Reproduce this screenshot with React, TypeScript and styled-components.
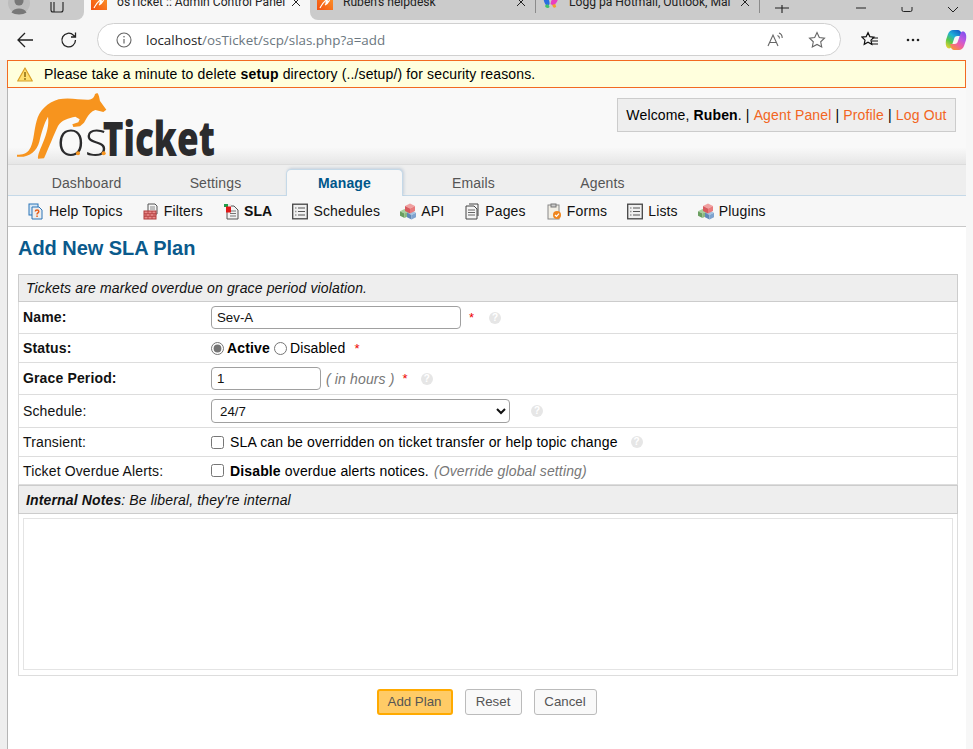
import React from 'react';
import styled, { createGlobalStyle } from 'styled-components';

const Global = createGlobalStyle`
  html, body { margin: 0; padding: 0; background: #fff; }
  body { font-family: "Liberation Sans", Arial, sans-serif; font-size: 14px; color: #000; }
  * { box-sizing: border-box; }
`;

const Screen = styled.div`width: 973px; height: 749px; overflow: hidden; display: flex; flex-direction: column; background: #f7f7f7;`;

const TabStrip = styled.div`height: 20px; flex: none; background: #f7f7f7; display: flex; overflow: hidden; font-family: Roboto, "Open Sans", sans-serif; color: #222;`;
const StripLeft = styled.div`width: 84px; height: 20px; flex: none; background: #cbcbcb; border-radius: 0 0 8px 0; display: flex;`;
const StripRight = styled.div`flex: 1; height: 20px; background: #cbcbcb; border-radius: 0 0 0 8px; display: flex;`;
const ProfileSlot = styled.div`width: 38px; height: 20px; display: flex; justify-content: center; align-items: flex-start;`;
const SideSlot = styled.div`width: 46px; height: 20px; padding-left: 12px;`;
const BrowserTab = styled.div<{ $w: number }>`
  width: ${p => p.$w}px; height: 20px; flex: none; display: flex; align-items: center; padding: 0 9px 16px 7px; gap: 10px;
`;
const TabLabel = styled.span`flex: 1; white-space: nowrap; overflow: hidden; line-height: 20px; height: 20px; font-size: 12.1px; margin-right: -6px;`;
const TabSep = styled.div`width: 1px; height: 13px; background: #8b8b8b; flex: none;`;
const WindowControls = styled.div`flex: 1; display: flex; align-items: flex-start; padding-left: 15px;`;
const WinBtn = styled.div<{ $ml: number }>`margin-left: ${p => p.$ml}px; height: 20px;`;

const Toolbar = styled.div`height: 40px; flex: none; display: flex; align-items: center; background: #f7f7f7; padding-left: 15px;`;
const ToolBtn = styled.div<{ $w: number }>`width: ${p => p.$w}px; display: flex; align-items: center;`;
const AddressBar = styled.div`width: 744px; height: 33px; margin-top: -1px; border: 1px solid #d0d0d0; border-radius: 17px; background: #fff; display: flex; align-items: center; padding: 0 14px 0 18px;`;
const Url = styled.div`flex: 1; margin-left: 14px; font-family: "Open Sans", "Noto Sans", sans-serif; font-size: 13.4px; color: #6b7780;`;
const UrlHost = styled.span`color: #1f1f1f;`;
const AddressIcons = styled.div`display: flex; align-items: center; gap: 24px;`;
const RightTools = styled.div`display: flex; align-items: center; margin-left: 20px; gap: 27px;`;

const Body = styled.div`flex: 1; display: flex; min-height: 0; letter-spacing: .14px;`;
const LeftGutter = styled.div`width: 8px; flex: none; background: #eee; border-right: 1px solid #b5b5b5;`;
const RightGutter = styled.div`width: 7px; flex: none; background: #f7f7f7;`;
const Main = styled.div`width: 958px; flex: none; background: #fff; display: flex; flex-direction: column;`;

const Notice = styled.div`
  height: 28px; margin-left: -1px; border: 1px solid #f26a22; background: #ffffdd; display: flex; align-items: center; padding-left: 9px; gap: 11px; font-size: 14px;
`;

const Header = styled.div`
  height: 77px; flex: none; background: linear-gradient(#f9f9f9 0, #f9f9f9 78%, #e6e6e6 100%); display: flex; justify-content: space-between; padding: 2px 10px 0 4px; border-bottom: 1px solid #dcdcdc;
`;
const LogoSvg = styled.svg`display: block; flex: none;`;
const Welcome = styled.div`
  margin-top: 8px; width: 339px; height: 34px; background: #eee; border: 1px solid #ccc; display: flex; align-items: center; justify-content: center; white-space: pre; font-size: 14px;
`;
const HeadLink = styled.a`color: #f26522; text-decoration: none;`;

const NavBar = styled.div`height: 31px; flex: none; background: #eee; border-bottom: 1px solid #c5d9e8; display: flex; padding: 4px 0 0 14px;`;
const NavTab = styled.div<{ $active?: boolean }>`
  width: ${p => (p.$active ? 117 : 129)}px; height: ${p => (p.$active ? 27 : 26)}px;
  margin: ${p => (p.$active ? '0 6px' : '0')};
  display: flex; align-items: center; justify-content: center; font-size: 14px;
  color: ${p => (p.$active ? '#00568a' : '#555')};
  font-weight: ${p => (p.$active ? 700 : 400)};
  background: ${p => (p.$active ? '#f7f7f7' : 'transparent')};
  border: ${p => (p.$active ? '1px solid #c5d9e8' : '0')};
  border-bottom: 0;
  border-radius: 5px 5px 0 0;
  box-shadow: ${p => (p.$active ? '1px -1px 3px rgba(120,150,180,.35)' : 'none')};
  padding-top: ${p => (p.$active ? 0 : 1)}px;
`;

const SubNav = styled.div`height: 31px; flex: none; background: #f7f7f7; border-bottom: 1px solid #c8c8c8; display: flex; align-items: center; padding-left: 20px; gap: 20.1px;`;
const SubItem = styled.div<{ $active?: boolean }>`display: flex; align-items: center; gap: 5px; font-size: 14px; font-weight: ${p => (p.$active ? 700 : 400)}; color: #111;`;

const Content = styled.div`flex: 1; padding: 0 8px 0 10px;`;
const Title = styled.h2`margin: 0; padding: 9px 0 0 0; height: 47px; font-size: 20px; line-height: 24px; font-weight: 700; letter-spacing: -.05px; color: #0a5a8c;`;

const FormTable = styled.div`border-left: 1px solid #ddd; border-right: 1px solid #ddd; border-bottom: 1px solid #ddd; width: 940px;`;
const Section = styled.div<{ $h: number }>`height: ${p => p.$h}px; margin: 0 -1px; background: #eee; border: 1px solid #ccc; display: flex; align-items: center; padding-left: 7px; font-style: italic; font-size: 14px; color: #111;`;
const Row = styled.div<{ $h: number }>`height: ${p => p.$h}px; display: grid; grid-template-columns: 192px 1fr; align-items: center; border-bottom: 1px solid #ddd;`;
const Label = styled.div<{ $req?: boolean; $up?: boolean }>`padding-left: 4px; margin-bottom: ${p => (p.$up ? 2 : 0)}px; font-size: 14px; font-weight: ${p => (p.$req ? 700 : 400)}; color: #111;`;
const Field = styled.div`display: flex; align-items: center; font-size: 14px; white-space: pre;`;
const TextInput = styled.input<{ $w: number }>`
  width: ${p => p.$w}px; height: 23px; border: 1px solid #a0a0a0; border-radius: 4px; padding: 0 5px; font: 13.3px "Liberation Sans", Arial, sans-serif; color: #111; background: #fff;
`;
const Select = styled.select`width: 299px; height: 24px; border: 1px solid #a0a0a0; border-radius: 4px; background: #fff; font: 13.3px "Liberation Sans", Arial, sans-serif; color: #111; padding: 0 4px;`;
const Radio = styled.input<{ $ml?: number }>`margin: 0 3px 0 ${p => p.$ml ?? 0}px; width: 13px; height: 13px; accent-color: #757575;`;
const Check = styled.input`margin: 0 6px 0 0; width: 13px; height: 13px; flex: none;`;
const Req = styled.span<{ $ml: number }>`margin-left: ${p => p.$ml}px; color: #e00; font-size: 13px;`;
const Hint = styled.span`margin-left: 5px; color: #777; font-style: italic;`;
const HelpDot = styled.span<{ $ml: number }>`
  margin-left: ${p => p.$ml}px; width: 12px; height: 12px; border-radius: 50%; background: #e6e6e6; color: #fff; font-weight: 700; font-size: 10px; line-height: 12px; text-align: center; flex: none;
`;
const NotesWrap = styled.div`height: 161px; padding: 4px 4px 5px 4px;`;
const Notes = styled.textarea`display: block; width: 100%; height: 152px; border: 1px solid #e4e4e4; resize: none; outline: none; background: #fff;`;

const Actions = styled.div`display: flex; justify-content: center; gap: 12px; padding: 13px 0 0 0; margin-left: -3px;`;
const Btn = styled.button<{ $primary?: boolean; $w: number }>`
  width: ${p => p.$w}px; height: 26px; padding: 0 0 2px; border-radius: 3px; font: 13.3px "Liberation Sans", Arial, sans-serif; color: #555;
  background: ${p => (p.$primary ? '#ffcb66' : '#f9f9f9')};
  border: ${p => (p.$primary ? '2px solid #ffaa00' : '1px solid #bbb')};
`;

const IconSvg = styled.svg`flex: none; display: block;`;
const CopilotSvg = styled.svg`flex: none; display: block; margin-left: -2px;`;

const Favicon = () => (
  <IconSvg width="16" height="16" viewBox="0 0 16 16">
    <defs><linearGradient id="fav" x1="0" y1="1" x2="1" y2="0"><stop offset="0" stopColor="#f4500f" /><stop offset="1" stopColor="#fb9a2c" /></linearGradient></defs>
    <rect width="16" height="16" fill="url(#fav)" />
    <path d="M3 14C5 10 7 7 11 5c-1 2-2 3-2 4l3-2c-1 2-2 3-4 4" fill="none" stroke="#fff" strokeWidth="1.200" />
  </IconSvg>
);
const Butterfly = () => (
  <IconSvg width="16" height="16" viewBox="0 0 17 16">
    <path d="M1 3c3-3 6 2 6 7L5 13C2 11 0 6 1 3z" fill="#2b6fe0" />
    <path d="M16 2c-3-3-7 2-8 8l3 2c3-2 6-7 5-10z" fill="#e83fc0" />
    <path d="M2 12c1 3 4 3 5 1l-2-3z" fill="#3fc46a" />
    <path d="M10 11c0 3 2 4 4 2l-1-3z" fill="#f59e2c" />
  </IconSvg>
);
const CloseX = () => (
  <IconSvg width="10" height="10" viewBox="0 0 10 10"><path d="M1 1l8 8M9 1L1 9" stroke="#222" strokeWidth="1" /></IconSvg>
);
const Avatar = () => (
  <svg width="22" height="15" viewBox="0 0 22 15"><circle cx="11" cy="3" r="11" fill="#bcbcbc" /><circle cx="11" cy="1" r="4.500" fill="#777" /><path d="M3.500 12.500c2-5.500 13-5.500 15 0C15 15 7 15 3.500 12.500z" fill="#777" /></svg>
);
const Sidebar = () => (
  <svg width="14" height="11" viewBox="0 0 14 11"><path d="M1 -3v11a2 2 0 0 0 2 2h8a2 2 0 0 0 2-2V-3M4 -3v13" fill="none" stroke="#222" strokeWidth="1.100" /></svg>
);
const Back = () => (
  <svg width="20" height="20" viewBox="0 0 20 20"><path d="M18 10H3M10 3l-7 7 7 7" fill="none" stroke="#222" strokeWidth="1.300" /></svg>
);
const Reload = () => (
  <svg width="18" height="18" viewBox="0 0 18 18"><path d="M15.500 9a6.800 6.800 0 1 1-2-4.800L15.500 6M15.500 1.500V6H11" fill="none" stroke="#222" strokeWidth="1.300" /></svg>
);
const Info = () => (
  <IconSvg width="16" height="16" viewBox="0 0 16 16"><circle cx="8" cy="8" r="7" fill="none" stroke="#666" strokeWidth="1.100" /><path d="M8 7v4.500" stroke="#666" strokeWidth="1.200" /><circle cx="8" cy="4.800" r=".8" fill="#666" /></IconSvg>
);
const ReadAloud = () => (
  <svg width="17" height="16" viewBox="0 0 17 16"><path d="M1 14L6 3l5 11M3 10.500h6" fill="none" stroke="#666" strokeWidth="1.100" /><path d="M10.500 3.500c1.500.5 2 1.500 2 3M12 1c2 .7 3.200 2.400 3.200 5" fill="none" stroke="#666" strokeWidth="1.100" /></svg>
);
const Star = () => (
  <svg width="18" height="18" viewBox="0 0 18 18"><path d="M9 1.600l2.300 4.900 5.200.7-3.800 3.600 1 5.200L9 13.400 4.300 16l1-5.200L1.500 7.200l5.200-.7z" fill="none" stroke="#666" strokeWidth="1.100" /></svg>
);
const Favorites = () => (
  <svg width="18" height="18" viewBox="0 0 18 18"><path d="M7 1.600l1.800 4 4.200.5-3 3 .8 4.300L7 11.300 3.200 13.400l.8-4.300-3-3 4.200-.5z" fill="none" stroke="#111" strokeWidth="1.200" /><path d="M11 7h6M11 10h6M10 13h7" stroke="#111" strokeWidth="1.100" /></svg>
);
const Dots = () => (
  <svg width="14" height="4" viewBox="0 0 14 4"><circle cx="2" cy="2" r="1.300" fill="#222" /><circle cx="7" cy="2" r="1.300" fill="#222" /><circle cx="12" cy="2" r="1.300" fill="#222" /></svg>
);
const Copilot = () => (
  <CopilotSvg width="22" height="22" viewBox="0 0 22 22">
    <defs>
      <linearGradient id="cpa" x1=".75" y1="0" x2=".1" y2="1"><stop offset="0" stopColor="#1560c8" /><stop offset=".35" stopColor="#1fb0d8" /><stop offset=".65" stopColor="#58c848" /><stop offset="1" stopColor="#f5d030" /></linearGradient>
      <linearGradient id="cpb" x1=".9" y1="0" x2=".3" y2="1"><stop offset="0" stopColor="#7a4ff0" /><stop offset=".4" stopColor="#c05ae0" /><stop offset=".7" stopColor="#f060a0" /><stop offset="1" stopColor="#f59040" /></linearGradient>
    </defs>
    <path d="M8 1H13C14.500 1 15.500 2 16 3.500L17 7H12.500C10.500 7 9.500 8 9 10L6.500 17.500C6 19.500 4 20 2.500 19C.5 17.500 .5 14 1 11L3 5C4 2.500 6 1 8 1Z" fill="url(#cpa)" />
    <path d="M14 21H9C7.500 21 6.500 20 6 18.500L5 15H9.500C11.500 15 12.500 14 13 12L15.500 4.500C16 2.500 18 2 19.500 3C21.500 4.500 21.500 8 21 11L19 17C18 19.500 16 21 14 21Z" fill="url(#cpb)" />
  </CopilotSvg>
);
const Warn = () => (
  <IconSvg width="16" height="15" viewBox="0 0 16 15"><path d="M8 1L15.300 14H.7z" fill="#ffdf70" stroke="#d8a028" strokeWidth="1.200" strokeLinejoin="round" /><path d="M8 5v5" stroke="#8a6a10" strokeWidth="1.500" /><circle cx="8" cy="12" r=".9" fill="#8a6a10" /></IconSvg>
);

const Sheet = ({ children }: { children?: React.ReactNode }) => (
  <IconSvg width="16" height="17" viewBox="0 0 16 17">{children}</IconSvg>
);
const IconHelp = () => (
  <Sheet>
    <rect x="1" y="1" width="9" height="11" fill="#d8e8f5" stroke="#2a74b8" />
    <path d="M4 4h7l3 3v9H4z" fill="#eee" stroke="#2a74b8" />
    <path d="M7.300 8.500c0-2 3.500-2 3.500 0 0 1.400-1.800 1.400-1.800 3" fill="none" stroke="#e8601c" strokeWidth="1.500" />
    <rect x="8.300" y="12.500" width="1.500" height="1.500" fill="#e8601c" />
  </Sheet>
);
const IconFilter = () => (
  <Sheet>
    <path d="M5 1h7l2 2v8H5z" fill="#f5f5f5" stroke="#555" />
    <path d="M7 4h5M7 6h5" stroke="#888" />
    <rect x="1" y="8" width="12" height="8" fill="#e88a8a" stroke="#b03a3a" />
    <path d="M1 10.700h12M1 13.300h12M5 8v2.700M9 8v2.700M3 10.700v2.600M7 10.700v2.600M11 10.700v2.600M5 13.300V16M9 13.300V16" stroke="#b03a3a" strokeWidth=".8" />
  </Sheet>
);
const IconSla = () => (
  <Sheet>
    <path d="M4 3h7l4 4v9H4z" fill="#f2f2f2" stroke="#555" />
    <path d="M7 8h6M7 10.500h6M7 13h6" stroke="#777" />
    <rect x="1" y="1" width="4" height="3" fill="#1e9e4a" />
    <rect x="5" y="1" width="3" height="3" fill="#e8e8e8" />
    <rect x="3" y="3.500" width="5" height="6" fill="#e01818" />
  </Sheet>
);
const IconList = () => (
  <Sheet>
    <rect x=".7" y="1.200" width="14.600" height="14.600" fill="#f0f0f0" stroke="#444" strokeWidth="1.300" />
    <path d="M6 5h7M6 8.500h7M6 12h7" stroke="#555" />
    <path d="M3 5h1.500M3 8.500h1.500M3 12h1.500" stroke="#999" strokeWidth="1.500" />
  </Sheet>
);
const Cube = ({ x, y, s, top, left, right }: { x: number; y: number; s: number; top: string; left: string; right: string }) => (
  <g>
    <path d={`M${x} ${y}l${s} ${s / 2}l${-s} ${s / 2}l${-s} ${-s / 2}z`} fill={top} />
    <path d={`M${x - s} ${y + s / 2}l${s} ${s / 2}v${s}l${-s} ${-s / 2}z`} fill={left} />
    <path d={`M${x + s} ${y + s / 2}l${-s} ${s / 2}v${s}l${s} ${-s / 2}z`} fill={right} />
  </g>
);
const IconCubes = () => (
  <Sheet>
    <Cube x={4.500} y={6} s={4.500} top="#a8cf9c" left="#6a9e60" right="#88b87e" />
    <Cube x={11.500} y={7.500} s={4.500} top="#a6c4e2" left="#5f88b8" right="#7ea3cf" />
    <Cube x={10} y={.5} s={5} top="#f0a0a0" left="#d85a5e" right="#e87a7c" />
  </Sheet>
);
const IconPages = () => (
  <Sheet>
    <path d="M5 1h9v12" fill="none" stroke="#444" />
    <path d="M2 3h8l3 3v10H2z" fill="#f5f5f5" stroke="#444" />
    <path d="M4 7h7M4 9.500h7M4 12h7" stroke="#666" />
  </Sheet>
);
const IconForms = () => (
  <Sheet>
    <rect x="2" y="2" width="11" height="14" fill="#f2efe6" stroke="#888" />
    <rect x="5" y="1" width="5" height="3" fill="#ccc" stroke="#777" />
    <circle cx="11" cy="12" r="4" fill="#f0861e" />
    <path d="M9 12l1.500 1.500L13 10.700" fill="none" stroke="#fff" strokeWidth="1.200" />
  </Sheet>
);

const subItems: [string, React.FC, boolean?][] = [
  ['Help Topics', IconHelp], ['Filters', IconFilter], ['SLA', IconSla, true], ['Schedules', IconList],
  ['API', IconCubes], ['Pages', IconPages], ['Forms', IconForms], ['Lists', IconList], ['Plugins', IconCubes],
];

export default function App() {
  return (
    <Screen>
      <Global />
      <TabStrip>
        <StripLeft>
          <ProfileSlot><Avatar /></ProfileSlot>
          <SideSlot><Sidebar /></SideSlot>
        </StripLeft>
        <BrowserTab $w={226}>
          <Favicon /><TabLabel>osTicket :: Admin Control Panel</TabLabel><CloseX />
        </BrowserTab>
        <StripRight>
          <BrowserTab $w={225}>
            <Favicon /><TabLabel>Ruben's helpdesk</TabLabel><CloseX />
          </BrowserTab>
          <TabSep />
          <BrowserTab $w={223}>
            <Butterfly /><TabLabel>Logg på Hotmail, Outlook, Mai</TabLabel><CloseX />
          </BrowserTab>
          <TabSep />
          <WindowControls>
            <WinBtn $ml={0}><svg width="14" height="8" viewBox="0 0 14 8"><path d="M7 -6V8M0 3h14" stroke="#222" strokeWidth="1.100" /></svg></WinBtn>
            <WinBtn $ml={66}><svg width="12" height="6" viewBox="0 0 12 6"><path d="M1 1h10" stroke="#222" /></svg></WinBtn>
            <WinBtn $ml={34}><svg width="12" height="6" viewBox="0 0 12 6"><path d="M1 -6v9a1.500 1.500 0 0 0 1.500 1.500h7A1.500 1.500 0 0 0 11 3v-9" fill="none" stroke="#222" /></svg></WinBtn>
            <WinBtn $ml={34}><svg width="12" height="6" viewBox="0 0 12 6"><path d="M1 0l5 5 5-5" fill="none" stroke="#222" /></svg></WinBtn>
          </WindowControls>
        </StripRight>
      </TabStrip>
      <Toolbar>
        <ToolBtn $w={45}><Back /></ToolBtn>
        <ToolBtn $w={37}><Reload /></ToolBtn>
        <AddressBar>
          <Info />
          <Url><UrlHost>localhost</UrlHost>/osTicket/scp/slas.php?a=add</Url>
          <AddressIcons><ReadAloud /><Star /></AddressIcons>
        </AddressBar>
        <RightTools>
          <Favorites /><Dots /><Copilot />
        </RightTools>
      </Toolbar>
      <Body>
        <LeftGutter />
        <Main>
          <Notice><Warn /><span>Please take a minute to delete <b>setup</b> directory (../setup/) for security reasons.</span></Notice>
          <Header>
            <LogoSvg width="204" height="72" viewBox="0 0 612 216">
              <path fill="#f7941e" d="M15 194C32 196 48 190 56 172C66 150 66 120 74 92C82 62 106 38 140 28C170 21 205 30 230 29C240 28 246 24 249 12L256 9C261 14 262 25 264 33L283 59L274 66L250 60C238 64 230 74 224 84L216 98L204 109L184 111L181 103L199 97L203 88L190 80C170 84 148 90 138 108C125 135 112 170 96 205L78 206C76 195 86 175 94 155C103 133 112 105 108 80C96 100 88 130 82 155C74 185 50 204 15 200Z" />
              <text x="134" y="197" fontFamily="'Open Sans', sans-serif" fontWeight="300" fontSize="145" fill="#2b2b2d" textLength="152" lengthAdjust="spacingAndGlyphs">os</text>
              <text x="272" y="199" fontFamily="'Open Sans', sans-serif" fontWeight="800" fontSize="143" fill="#2b2b2d" textLength="337" lengthAdjust="spacingAndGlyphs">Ticket</text>
              <circle cx="198" cy="190" r="6" fill="#f7941e" />
              <circle cx="275" cy="190" r="6" fill="#f7941e" />
            </LogoSvg>
            <Welcome>Welcome, <b>Ruben</b>. | <HeadLink>Agent Panel</HeadLink> | <HeadLink>Profile</HeadLink> | <HeadLink>Log Out</HeadLink></Welcome>
          </Header>
          <NavBar>
            <NavTab>Dashboard</NavTab>
            <NavTab>Settings</NavTab>
            <NavTab $active>Manage</NavTab>
            <NavTab>Emails</NavTab>
            <NavTab>Agents</NavTab>
          </NavBar>
          <SubNav>
            {subItems.map(([name, Icon, active]) => (
              <SubItem key={name} $active={active}><Icon />{name}</SubItem>
            ))}
          </SubNav>
          <Content>
            <Title>Add New SLA Plan</Title>
            <FormTable>
              <Section $h={28}>Tickets are marked overdue on grace period violation.</Section>
              <Row $h={32}>
                <Label $req $up>Name:</Label>
                <Field><TextInput $w={250} defaultValue="Sev-A" /><Req $ml={8}>*</Req><HelpDot $ml={15}>?</HelpDot></Field>
              </Row>
              <Row $h={29}>
                <Label $req>Status:</Label>
                <Field><Radio type="radio" name="st" defaultChecked /><b>Active</b><Radio $ml={4} type="radio" name="st" />Disabled<Req $ml={9}>*</Req></Field>
              </Row>
              <Row $h={32}>
                <Label $req $up>Grace Period:</Label>
                <Field><TextInput $w={110} defaultValue="1" /><Hint>( in hours )</Hint><Req $ml={8}>*</Req><HelpDot $ml={13}>?</HelpDot></Field>
              </Row>
              <Row $h={33}>
                <Label>Schedule:</Label>
                <Field><Select defaultValue="24/7"><option>24/7</option></Select><HelpDot $ml={21}>?</HelpDot></Field>
              </Row>
              <Row $h={29}>
                <Label>Transient:</Label>
                <Field><Check type="checkbox" />SLA can be overridden on ticket transfer or help topic change<HelpDot $ml={13}>?</HelpDot></Field>
              </Row>
              <Row $h={28}>
                <Label>Ticket Overdue Alerts:</Label>
                <Field><Check type="checkbox" /><b>Disable</b> overdue alerts notices.<Hint>(Override global setting)</Hint></Field>
              </Row>
              <Section $h={29}><span><b>Internal Notes</b>: Be liberal, they're internal</span></Section>
              <NotesWrap><Notes /></NotesWrap>
            </FormTable>
            <Actions>
              <Btn $primary $w={76}>Add Plan</Btn>
              <Btn $w={57}>Reset</Btn>
              <Btn $w={63}>Cancel</Btn>
            </Actions>
          </Content>
        </Main>
        <RightGutter />
      </Body>
    </Screen>
  );
}
